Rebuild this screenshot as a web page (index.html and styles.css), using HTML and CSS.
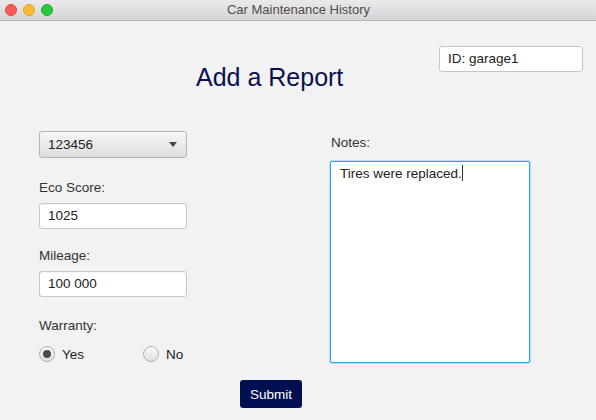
FILE: index.html
```html
<!DOCTYPE html>
<html>
<head>
<meta charset="utf-8">
<title>Car Maintenance History</title>
<link rel="stylesheet" href="styles.css">
</head>
<body>
<div class="window">
  <div class="titlebar">
    <div class="lights">
      <span class="light red"></span>
      <span class="light yellow"></span>
      <span class="light green"></span>
    </div>
    <div class="win-title">Car Maintenance History</div>
  </div>
  <div class="content">
    <div class="header">
      <h1 class="page-title">Add a Report</h1>
      <div class="id-box">ID: garage1</div>
    </div>
    <div class="columns">
      <div class="left">
        <div class="combo">
          <span>123456</span>
          <span class="arrow"></span>
        </div>
        <div class="group eco">
          <div class="label">Eco Score:</div>
          <div class="field">1025</div>
        </div>
        <div class="group mileage">
          <div class="label">Mileage:</div>
          <div class="field">100 000</div>
        </div>
        <div class="group warranty">
          <div class="label">Warranty:</div>
          <div class="radios">
            <div class="radio-item"><span class="radio checked"></span><span>Yes</span></div>
            <div class="radio-item"><span class="radio"></span><span>No</span></div>
          </div>
        </div>
      </div>
      <div class="right">
        <div class="label notes-label">Notes:</div>
        <div class="notes">Tires were replaced.<span class="caret"></span></div>
      </div>
    </div>
    <div class="actions">
      <button class="submit">Submit</button>
    </div>
  </div>
</div>
</body>
</html>
```
FILE: styles.css
```css
* { box-sizing: border-box; }
html, body { margin: 0; padding: 0; }
body {
  width: 596px;
  height: 420px;
  overflow: hidden;
  background: #f2f2f2;
  font-family: "Liberation Sans", Arial, sans-serif;
  font-size: 13.5px;
  color: #333;
}
.window { width: 596px; height: 420px; background: #f2f2f2; }
.titlebar {
  height: 21px;
  background: linear-gradient(#ebe9eb, #d6d5d6);
  border-bottom: 1px solid #b4b4b4;
  display: flex;
  align-items: center;
}
.lights { display: flex; gap: 6px; padding-left: 5px; }
.light { width: 12px; height: 12px; border-radius: 50%; display: block; }
.red { background: #fc5b57; border: 1px solid #e2463f; }
.yellow { background: #fdbc2e; border: 1px solid #e0a126; }
.green { background: #27c93f; border: 1px solid #1eab2d; }
.win-title {
  flex: 1;
  text-align: center;
  margin-left: -52px;
  font-size: 13px;
  color: #4d4d4d;
  line-height: 20px;
}
.content { display: flex; flex-direction: column; }
.header { display: flex; align-items: flex-start; padding-top: 25px; }
.page-title {
  margin: 17px 0 0 196px;
  font-weight: normal;
  font-size: 25px;
  line-height: 28px;
  color: #0b0f52;
}
.id-box {
  margin-left: auto;
  margin-right: 13px;
  width: 144px;
  height: 26px;
  background: #fff;
  border: 1px solid #c6c6c6;
  border-radius: 3px;
  padding-left: 8px;
  line-height: 24px;
  color: #222;
}
.columns { display: flex; margin-top: 40px; padding-left: 39px; gap: 143px; }
.left { width: 148px; display: flex; flex-direction: column; }
.combo {
  height: 27px;
  border: 1px solid #b5b5b5;
  border-radius: 3px;
  background: linear-gradient(#f6f6f6, #dedede);
  display: flex;
  align-items: center;
  justify-content: space-between;
  padding: 0 9px 0 8px;
  color: #222;
}
.arrow {
  width: 0; height: 0;
  border-left: 4px solid transparent;
  border-right: 4px solid transparent;
  border-top: 5px solid #444;
}
.label { line-height: 16px; color: #333; }
.group { display: flex; flex-direction: column; gap: 7px; }
.eco { margin-top: 22px; }
.mileage { margin-top: 19px; }
.warranty { margin-top: 21px; gap: 12px; }
.field {
  height: 26px;
  background: #fff;
  border: 1px solid #c6c6c6;
  border-radius: 3px;
  padding-left: 8px;
  line-height: 24px;
  color: #222;
  box-shadow: inset 0 1px 1px rgba(0,0,0,0.04);
}
.radios { display: grid; grid-template-columns: 104px auto; }
.radio-item { display: flex; align-items: center; gap: 7px; height: 16px; color: #222; }
.radio {
  width: 16px; height: 16px;
  border-radius: 50%;
  border: 1px solid #b0b0b0;
  background: linear-gradient(#fafafa, #e0e0e0);
  display: flex; align-items: center; justify-content: center;
}
.radio.checked::after {
  content: "";
  width: 8px; height: 8px; border-radius: 50%;
  background: #4b4b4b;
}
.right { width: 200px; display: flex; flex-direction: column; }
.notes-label { margin-top: 4px; padding-left: 1px; }
.notes {
  margin-top: 10px;
  height: 202px;
  background: #fff;
  border: 1px solid #27a5e0;
  border-radius: 2px;
  box-shadow: 0 0 0 1px #b9e0f4;
  padding: 3px 9px;
  line-height: 18px;
  color: #222;
}
.caret {
  display: inline-block;
  width: 1px;
  height: 16px;
  background: #333;
  vertical-align: -3px;
}
.actions { margin-top: 17px; padding-left: 240px; }
.submit {
  width: 62px;
  height: 28px;
  background: #000f50;
  color: #fff;
  border: none;
  border-radius: 3px;
  font-family: "Liberation Sans", Arial, sans-serif;
  font-size: 13.5px;
  padding: 0;
}
```
